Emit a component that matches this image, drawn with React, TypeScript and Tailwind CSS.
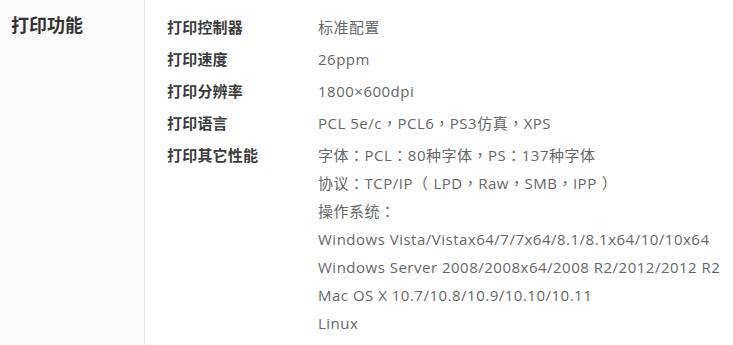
const specs: { label: string; values: string[] }[] = [
  { label: '打印控制器', values: ['标准配置'] },
  { label: '打印速度', values: ['26ppm'] },
  { label: '打印分辨率', values: ['1800×600dpi'] },
  { label: '打印语言', values: ['PCL 5e/c，PCL6，PS3仿真，XPS'] },
  {
    label: '打印其它性能',
    values: [
      '字体：PCL：80种字体，PS：137种字体',
      '协议：TCP/IP（LPD，Raw，SMB，IPP）',
      '操作系统：',
      'Windows Vista/Vistax64/7/7x64/8.1/8.1x64/10/10x64',
      'Windows Server 2008/2008x64/2008 R2/2012/2012 R2',
      'Mac OS X 10.7/10.8/10.9/10.10/10.11',
      'Linux',
    ],
  },
];

const tc = { fontFamily: '"Noto Sans CJK TC", sans-serif' };

// full-width punctuation sits centred in its cell, as the TC cut draws it
function Line({ text }: { text: string }) {
  const parts = text.split(/([：，（）])/);
  return (
    <span className="whitespace-nowrap">
      {parts.map((p, i) => {
        if (p === '（')
          return (
            <span key={i} className="mr-[5px]" style={tc}>
              {p}
            </span>
          );
        if (p === '）')
          return (
            <span key={i} className="ml-[5px]" style={tc}>
              {p}
            </span>
          );
        if (p === '：' || p === '，')
          return (
            <span key={i} style={tc}>
              {p}
            </span>
          );
        return p;
      })}
    </span>
  );
}

export default function App() {
  return (
    <div
      className="flex w-[733px] h-[345px] bg-white overflow-hidden"
      style={{ fontFamily: '"Open Sans", "Noto Sans CJK SC", sans-serif' }}
    >
      <div className="w-[145px] shrink-0 bg-[#f9f9f9] border-r border-[#e6e6e6] pl-[11px] pt-[12px]">
        <h2 className="text-[18px] leading-[26px] font-bold text-[#333]">打印功能</h2>
      </div>
      <div className="flex-1 pt-[11px] pl-[22px]">
        {specs.map((s) => (
          <div key={s.label} className="flex py-[2px]">
            <div className="w-[151px] shrink-0 text-[15px] leading-[28px] font-bold text-[#3c3c3c] tracking-[0.2px]">
              {s.label}
            </div>
            <div className="flex flex-col text-[15px] leading-[28px] text-[#666] tracking-[0.5px]">
              {s.values.map((v) => (
                <Line key={v} text={v} />
              ))}
            </div>
          </div>
        ))}
      </div>
    </div>
  );
}
